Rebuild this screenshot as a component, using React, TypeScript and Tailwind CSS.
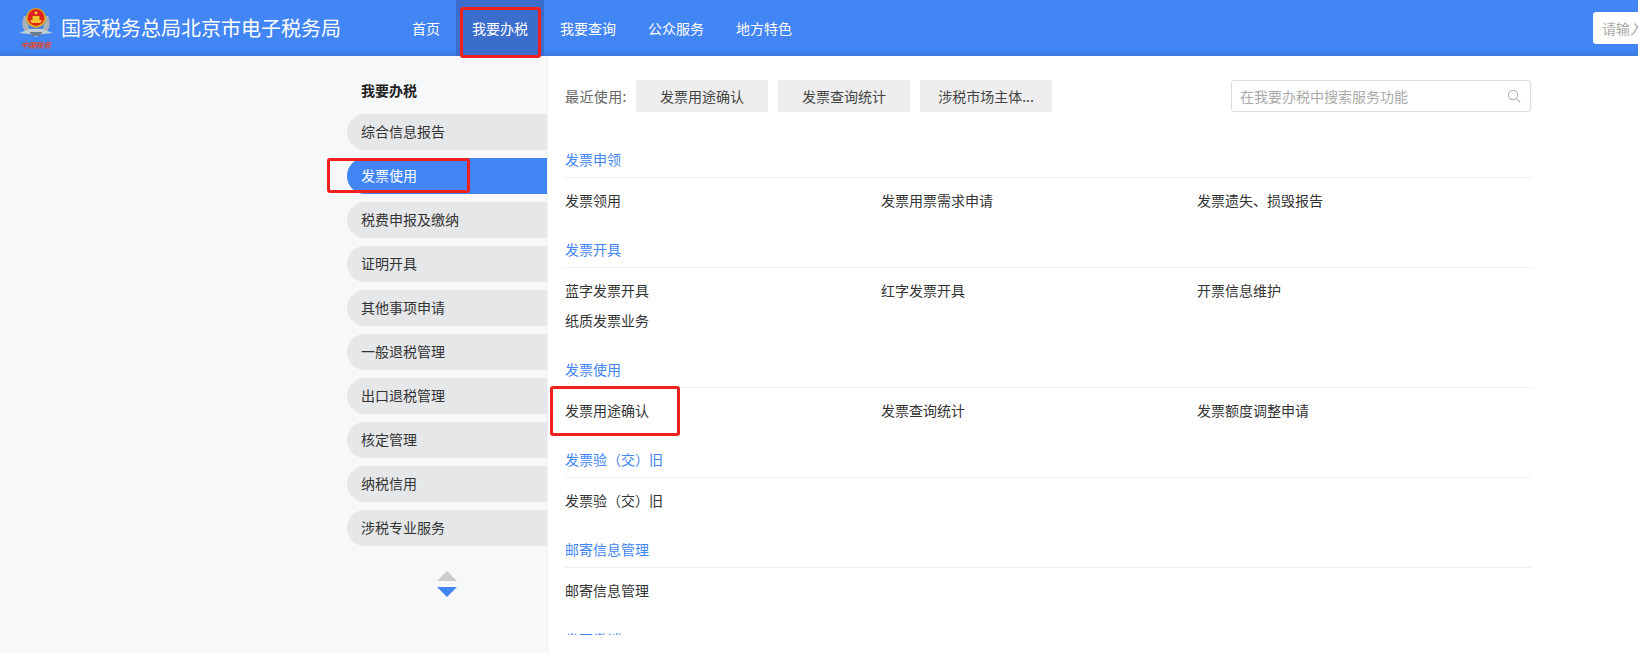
const navItems = ['首页', '我要办税', '我要查询', '公众服务', '地方特色']

const sideItems = [
  '综合信息报告',
  '发票使用',
  '税费申报及缴纳',
  '证明开具',
  '其他事项申请',
  '一般退税管理',
  '出口退税管理',
  '核定管理',
  '纳税信用',
  '涉税专业服务',
]

const recent = ['发票用途确认', '发票查询统计', '涉税市场主体...']

const sections = [
  { title: '发票申领', items: ['发票领用', '发票用票需求申请', '发票遗失、损毁报告'] },
  { title: '发票开具', items: ['蓝字发票开具', '红字发票开具', '开票信息维护', '纸质发票业务'] },
  { title: '发票使用', items: ['发票用途确认', '发票查询统计', '发票额度调整申请'] },
  { title: '发票验（交）旧', items: ['发票验（交）旧'] },
  { title: '邮寄信息管理', items: ['邮寄信息管理'] },
  { title: '发票缴销', items: ['发票缴销'] },
]

function Logo() {
  return (
    <div className="flex w-[34px] flex-col items-center">
      <svg width="34" height="32" viewBox="0 0 34 32">
        {/* wreath */}
        <path d="M5 8 C2 15 3 22 9 26 L13 24 C9 21 8 15 9 8 Z" fill="#a9b1b8" />
        <path d="M29 8 C32 15 31 22 25 26 L21 24 C25 21 26 15 25 8 Z" fill="#a9b1b8" />
        {/* ribbon */}
        <path d="M0 25 L11 21 L23 21 L34 25 L24 26 L17 29 L10 26 Z" fill="#c4ccd4" />
        <path d="M11 24 L23 24 L22 28 L12 28 Z" fill="#6b7c93" />
        {/* badge */}
        <circle cx="17" cy="10" r="10" fill="#d9a520" />
        <circle cx="17" cy="9.5" r="8.2" fill="#e0201c" />
        <path d="M11 12 H23 L21.5 15 H12.5 Z" fill="#f2c230" />
        <rect x="13.5" y="8" width="7" height="4" fill="#f2c230" />
        <circle cx="17" cy="5" r="1.4" fill="#f6d54a" />
      </svg>
      <span className="text-[7.5px] leading-[9px] font-bold whitespace-nowrap text-[#e0492a] italic">中国税务</span>
    </div>
  )
}

export default function App() {
  return (
    <div className="relative flex h-screen w-full flex-col overflow-hidden bg-white font-['Noto_Sans_CJK_SC','Liberation_Sans',sans-serif] text-[14px] text-[#333]">
      {/* Header */}
      <header className="flex h-14 shrink-0 items-center bg-gradient-to-b from-[#4285f4] from-90% to-[#3d78dc]">
        <div className="ml-[19px] w-[42px]">
          <Logo />
        </div>
        <div className="w-[335px] text-[20px] whitespace-nowrap text-white">国家税务总局北京市电子税务局</div>
        <nav className="flex h-full">
          {navItems.map((item) => (
            <div
              key={item}
              className={`flex h-full items-center px-4 text-white ${item === '我要办税' ? 'bg-[#3b6dcd]' : ''}`}
            >
              {item}
            </div>
          ))}
        </nav>
        <div className="ml-auto -mr-[200px] flex h-8 w-[245px] items-center rounded-[3px] bg-white px-[9px] text-[#aaa]">
          请输入
        </div>
      </header>

      <div className="flex min-h-0 flex-1">
        {/* Sidebar */}
        <aside className="w-[547px] shrink-0 bg-[#f7f8fa] pt-6 pl-[347px]">
          <div className="mb-3 pb-px pl-[14px] leading-[21px] font-bold text-[#222]">我要办税</div>
          <ul className="flex flex-col gap-2">
            {sideItems.map((item) => (
              <li
                key={item}
                className={`h-9 rounded-l-[18px] pl-[14px] leading-[34px] ${
                  item === '发票使用' ? 'bg-[#4285f4] text-white' : 'bg-[#e6e7e9] text-[#333]'
                }`}
              >
                {item}
              </li>
            ))}
          </ul>
          <div className="mt-[25px] flex flex-col items-center gap-1.5">
            <div className="h-0 w-0 border-x-[10px] border-b-[10px] border-x-transparent border-b-[#ccc]" />
            <div className="h-0 w-0 border-x-[10px] border-t-[10px] border-x-transparent border-t-[#4285f4]" />
          </div>
        </aside>

        {/* Main panel */}
        <main className="min-w-0 flex-1 border-l border-[#f0f0f0] pt-6 pl-[17px]">
          <div className="flex w-[966px] items-center">
            <span className="w-[71px] tracking-[0.4px] text-[#666]">最近使用:</span>
            <div className="flex gap-2.5">
              {recent.map((item) => (
                <div key={item} className="flex h-8 w-[132px] items-center justify-center bg-[#eee] text-[#444]">
                  {item}
                </div>
              ))}
            </div>
            <div className="ml-auto flex h-8 w-[300px] items-center justify-between rounded-[3px] border border-[#ddd] pr-[9px] pl-2 text-[#aaa]">
              <span>在我要办税中搜索服务功能</span>
              <svg width="14" height="14" viewBox="0 0 14 14" fill="none" stroke="#b5b5b5" strokeWidth="1.1">
                <circle cx="6" cy="6" r="4.6" />
                <path d="M9.4 9.4 L13 13" />
              </svg>
            </div>
          </div>

          <div className="mt-[29px] h-[494px] w-[966px] overflow-hidden">
            {sections.map((section) => (
              <section key={section.title} className="mb-[15px]">
                <div className="h-[37px] border-b border-[#eee] leading-9 text-[#4285f4]">{section.title}</div>
                <div className="grid grid-cols-[316px_316px_1fr] pt-2">
                  {section.items.map((item) => (
                    <div key={item} className="h-[30px] leading-7 text-[#333]">
                      {item}
                    </div>
                  ))}
                </div>
              </section>
            ))}
          </div>
        </main>
      </div>

      {/* Red annotation boxes drawn over the screenshot */}
      <div className="absolute top-[7px] left-[460px] h-[51px] w-[81px] rounded-[3px] border-[3px] border-[#f0201c]" />
      <div className="absolute top-[158px] left-[327px] h-[35px] w-[143px] rounded-[3px] border-[3px] border-[#f0201c]" />
      <div className="absolute top-[386px] left-[550px] h-[50px] w-[130px] rounded-[3px] border-[3px] border-[#f0201c]" />
    </div>
  )
}
